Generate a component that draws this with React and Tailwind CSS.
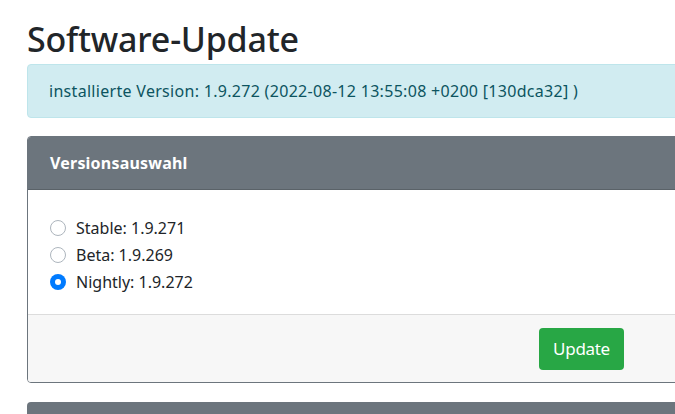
const versions = [
  { id: "stable", label: "Stable: 1.9.271", checked: false },
  { id: "beta", label: "Beta: 1.9.269", checked: false },
  { id: "nightly", label: "Nightly: 1.9.272", checked: true },
];

const Radio = ({ checked }) =>
  checked ? (
    <span className="w-4 h-4 rounded-full bg-[#007bff] flex items-center justify-center shrink-0">
      <span className="w-[6px] h-[6px] rounded-full bg-white" />
    </span>
  ) : (
    <span className="w-4 h-4 rounded-full border border-[#adb5bd] bg-white shrink-0" />
  );

export default function App() {
  return (
    <div
      className="w-[675px] h-[414px] overflow-hidden bg-white text-[#212529]"
      style={{ fontFamily: '"Noto Sans", "Open Sans", sans-serif' }}
    >
      <div className="w-[760px] pl-[27px] pt-[17px]">
        <h1 className="text-[34px] font-medium leading-[44px] mb-[3px] tracking-[-0.2px]">
          Software-Update
        </h1>

        {/* installierte Version */}
        <div className="bg-[#d1ecf1] border border-[#bee5eb] rounded-[4px] text-[#0c5460] h-[54px] px-[21px] flex items-center text-[16px] tracking-[0.3px]">
          installierte Version: 1.9.272 (2022-08-12 13:55:08 +0200 [130dca32] )
        </div>

        {/* Versionsauswahl */}
        <div className="mt-[18px] border border-[#6c757d] rounded-[4px] overflow-hidden">
          <div className="bg-[#6c757d] h-[53px] border-b border-[#5a6268] px-[22px] flex items-center text-white font-bold text-[16px] tracking-[0.2px]">
            Versionsauswahl
          </div>
          <div className="pt-[24px] pb-[19px] px-[22px]">
            {versions.map((v) => (
              <label key={v.id} className="flex items-center gap-[10px] h-[27px] text-[16px]">
                <Radio checked={v.checked} />
                <span>{v.label}</span>
              </label>
            ))}
          </div>
          <div className="bg-[#f7f7f7] border-t border-[#dcdcdc] h-[68px] pt-[13px]">
            <button className="ml-[511px] w-[85px] h-[42px] bg-[#28a745] rounded-[4px] text-white text-[17px] tracking-[-0.3px]">
              Update
            </button>
          </div>
        </div>

        <div className="mt-[19px] bg-[#6c757d] h-[40px] rounded-t-[4px]" />
      </div>
    </div>
  );
}
